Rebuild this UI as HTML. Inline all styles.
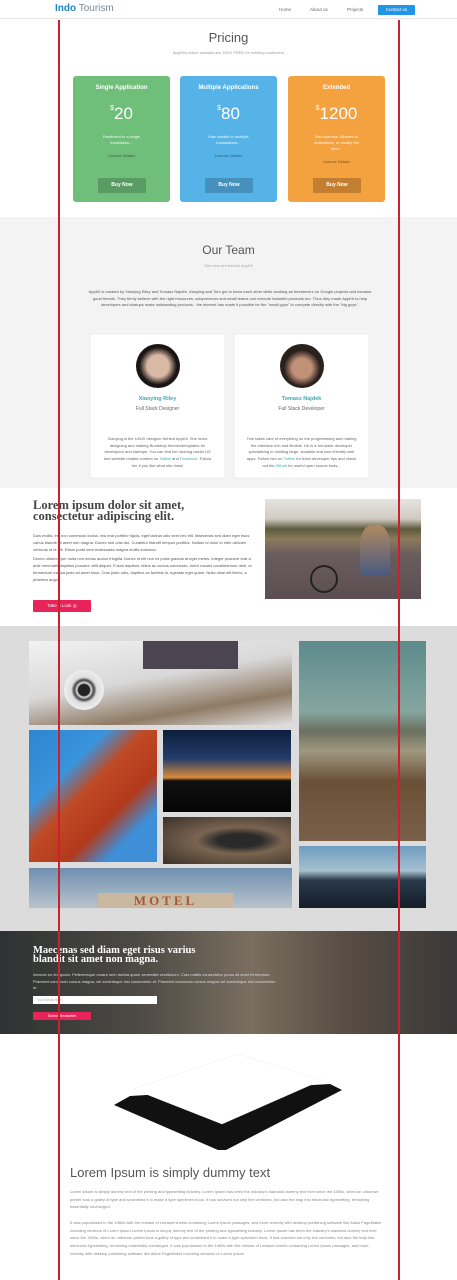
<!DOCTYPE html>
<html><head><meta charset="utf-8"><style>
*{margin:0;padding:0;box-sizing:border-box}
body{width:457px;height:1280px;position:relative;overflow:hidden;background:#fff;font-family:"Liberation Sans",sans-serif;color:#555}
.a{position:absolute}
.t{font-size:4px;line-height:6.5px;color:#666}
.card{position:absolute;top:76px;width:97px;height:126px;border-radius:3px;color:#fff;text-align:center}
.card h4{font-size:6px;margin-top:9px;font-weight:bold}
.card .p{font-size:17px;margin-top:13px;font-weight:300}
.card .p sup{font-size:7px;vertical-align:top;position:relative;top:1px}
.card .d{font-size:4px;line-height:6px;margin-top:10px;padding:0 20px;opacity:.9}
.card .l{font-size:4px;margin-top:7px;color:rgba(0,0,0,.5)}
.card .b{position:absolute;left:25px;bottom:9px;width:48px;height:15px;font-size:5px;font-weight:bold;line-height:15px;border-radius:1px}
.tm{position:absolute;top:335px;width:133px;height:142px;background:#fff;text-align:center}
.av{width:44px;height:44px;border-radius:50%;margin:9px auto 0}
.tm .n{font-size:5.5px;font-weight:bold;color:#3fa7b0;margin-top:8px}
.tm .r{font-size:5px;color:#666;margin-top:4px}
.tm .x{font-size:4px;line-height:6.7px;color:#666;margin-top:24px;padding:0 10px}
.red{position:absolute;top:20px;width:2px;height:1260px;background:#cc2030}
</style></head><body>
<div class="a" style="top:0;left:0;width:457px;height:19px;border-bottom:1px solid #e4e4e4;background:#fff"></div>
<div class="a" style="left:55px;top:3px;font-size:10px;color:#1f86c9"><b>Indo</b> <span style="color:#7a8a96">Tourism</span></div>
<div class="a" style="left:279px;top:7px;font-size:4.5px;color:#666">Home</div>
<div class="a" style="left:310px;top:7px;font-size:4.5px;color:#666">About us</div>
<div class="a" style="left:347px;top:7px;font-size:4.5px;color:#666">Projects</div>
<div class="a" style="left:378px;top:5px;width:37px;height:10px;background:#2196e8;border-radius:1px;color:#fff;font-size:4.5px;line-height:10px;text-align:center">Contact us</div>
<div class="a" style="left:0;top:30px;width:457px;text-align:center;font-size:13px;color:#555;font-weight:300">Pricing</div>
<div class="a t" style="left:0;top:50px;width:457px;text-align:center;color:#999">AppKit's future updates are 100% FREE for existing customers</div>
<div class="card" style="left:73px;background:#6fbf7a"><h4>Single Application</h4><div class="p"><sup>$</sup>20</div><div class="d">Restricted to a single installation...</div><div class="l">License Details</div><div class="b" style="background:#5a9a63">Buy Now</div></div>
<div class="card" style="left:180px;background:#55b3e8"><h4>Multiple Applications</h4><div class="p"><sup>$</sup>80</div><div class="d">Max installs to multiple installations...</div><div class="l">License Details</div><div class="b" style="background:#4690bd">Buy Now</div></div>
<div class="card" style="left:288px;background:#f4a23f"><h4>Extended</h4><div class="p"><sup>$</sup>1200</div><div class="d">Max licences. Allowed to redistribute, or modify the item...</div><div class="l">License Details</div><div class="b" style="background:#c27e31">Buy Now</div></div>
<div class="a" style="left:0;top:217px;width:457px;height:271px;background:#f3f3f3"></div>
<div class="a" style="left:0;top:243px;width:457px;text-align:center;font-size:12px;color:#555;font-weight:300">Our Team</div>
<div class="a t" style="left:0;top:263px;width:457px;text-align:center;color:#aaa">See who are behind AppKit</div>
<div class="a t" style="left:84px;top:289px;width:292px;text-align:center;color:#555">AppKit is created by Xiaoying Riley and Tomasz Najdek. Xiaoying and Tom got to know each other while working as freelancers on Google projects and became good friends. They firmly believe with the right resources, solopreneurs and small teams can execute beautiful products too. Thus they made AppKit to help developers and startups make outstanding products - the internet has made it possible for the "small guys" to compete directly with the "big guys".</div>
<div class="tm" style="left:91px"><div class="av" style="background:radial-gradient(circle at 50% 50%,#d9b8a4 0 35%,#1a1514 60%)"></div><div class="n">Xiaoying Riley</div><div class="r">Full Stack Designer</div><div class="x">Xiaoying is the UI/UX designer behind AppKit. She loves designing and making Bootstrap themes/templates for developers and startups. You can find her sharing useful UX and website related content on <span style="color:#3fa7b0">Twitter</span> and <span style="color:#3fa7b0">Facebook</span>. Follow her if you like what she does!</div></div>
<div class="tm" style="left:235px"><div class="av" style="background:radial-gradient(circle at 50% 55%,#c09078 0 30%,#2a211c 55%)"></div><div class="n">Tomasz Najdek</div><div class="r">Full Stack Developer</div><div class="x">Tom takes care of everything on the programming and making the interface rich and flexible. He is a full-stack developer specialising in building large, scalable and user-friendly web apps. Follow him on <span style="color:#3fa7b0">Twitter</span> for fresh developer tips and check out his <span style="color:#3fa7b0">Github</span> for useful open source tools...</div></div>
<div class="a" style="left:33px;top:500px;font-family:'Liberation Serif',serif;font-weight:bold;font-size:12.5px;line-height:11px;color:#444">Lorem ipsum dolor sit amet,<br>consectetur adipiscing elit.</div>
<div class="a t" style="left:33px;top:532px;width:222px;color:#555;line-height:7px">Duis mollis, est non commodo luctus, nisi erat porttitor ligula, eget lacinia odio sem nec elit. Maecenas sed diam eget risus varius blandit sit amet non magna. Donec sed odio dui. Curabitur blandit tempus porttitor. Nullam id dolor id nibh ultricies vehicula ut id elit. Etiam porta sem malesuada magna mollis euismod.<div style="height:2px"></div>Donec ullamcorper nulla non metus auctor fringilla. Donec id elit non mi porta gravida at eget metus. Integer posuere erat a ante venenatis dapibus posuere velit aliquet. Fusce dapibus, tellus ac cursus commodo, tortor mauris condimentum nibh, ut fermentum massa justo sit amet risus. Cras justo odio, dapibus ac facilisis in, egestas eget quam. Nulla vitae elit libero, a pharetra augue.</div>
<div class="a" style="left:33px;top:600px;width:58px;height:12px;background:#e8235a;border-radius:1px;color:#fff;font-size:4.5px;line-height:12px;text-align:center">Take a Look ◎</div>
<div class="a" style="left:265px;top:499px;width:156px;height:100px;background:linear-gradient(180deg,#e6e4e0 0,#cfc9c0 20%,#5c5a3e 30%,#8b7a5a 40%,#6b5d5e 55%,#5b4e52 100%)"></div>
<div class="a" style="left:360px;top:525px;width:30px;height:50px;background:linear-gradient(#b08a60,#4a5a80);border-radius:40% 40% 10% 10%"></div>
<div class="a" style="left:310px;top:565px;width:28px;height:28px;border:2px solid #222;border-radius:50%"></div>
<div class="a" style="left:0;top:626px;width:457px;height:305px;background:#dcdcdc"></div>
<div class="a" style="left:29px;top:641px;width:263px;height:84px;background:linear-gradient(170deg,#f2f2f2 0,#d8d8d8 45%,#8f7a64 75%,#e0e0e0 100%)"></div>
<div class="a" style="left:64px;top:670px;width:40px;height:40px;border-radius:50%;background:radial-gradient(#222 0 20%,#ddd 25%,#444 35%,#ddd 45%,#eee 70%)"></div>
<div class="a" style="left:143px;top:641px;width:95px;height:28px;background:#4a4550"></div>
<div class="a" style="left:29px;top:730px;width:128px;height:132px;background:linear-gradient(135deg,#2b86d0 0,#3a94dc 30%,#c04a25 45%,#b23a1c 65%,#3e8ed8 80%)"></div>
<div class="a" style="left:163px;top:730px;width:128px;height:82px;background:linear-gradient(180deg,#0d1e3e 0,#253c6a 35%,#d98a3a 58%,#101010 62%,#060606 100%)"></div>
<div class="a" style="left:163px;top:817px;width:128px;height:47px;background:radial-gradient(ellipse at 60% 50%,#2a2a2a 0 20%,#7a6450 40%,#3a3128 100%)"></div>
<div class="a" style="left:29px;top:868px;width:263px;height:40px;background:linear-gradient(180deg,#6f8fb0,#b8c3cc)"></div>
<div class="a" style="left:98px;top:893px;width:135px;height:15px;background:#cbb8a0;color:#a05a3a;font-family:'Liberation Serif',serif;font-size:13px;line-height:15px;text-align:center;font-weight:bold;letter-spacing:3px">MOTEL</div>
<div class="a" style="left:299px;top:641px;width:127px;height:200px;background:linear-gradient(180deg,#5d8a8c 0,#86a6a0 35%,#6a7060 45%,#a09880 55%,#6b5038 70%,#7a6048 100%)"></div>
<div class="a" style="left:299px;top:846px;width:127px;height:62px;background:linear-gradient(180deg,#6e9cc0 0,#a8c0d0 40%,#2a3a4a 55%,#141e28 100%)"></div>
<div class="a" style="left:0;top:931px;width:457px;height:103px;background:linear-gradient(90deg,#2e3232 0,#4c4a44 30%,#7a6e60 55%,#5a4e44 75%,#3a3838 100%)"></div>
<div class="a" style="left:33px;top:947px;font-family:'Liberation Serif',serif;font-weight:bold;font-size:10.5px;line-height:8.5px;color:#fff">Maecenas sed diam eget risus varius<br>blandit sit amet non magna.</div>
<div class="a t" style="left:33px;top:972px;width:245px;color:#ddd">Aenean eu leo quam. Pellentesque ornare sem lacinia quam venenatis vestibulum. Cras mattis consectetur purus sit amet fermentum. Praesent commodo cursus magna, vel scelerisque nisl consectetur et. Praesent commodo cursus magna vel scelerisque nisl consectetur et.</div>
<div class="a" style="left:33px;top:996px;width:124px;height:8px;background:#fff;font-size:3.5px;line-height:8px;color:#aaa;padding-left:4px">Your Email Here...</div>
<div class="a" style="left:33px;top:1012px;width:58px;height:8px;background:#e8235a;color:#fff;font-size:3.5px;line-height:8px;text-align:center">Submit Newsletter</div>
<svg class="a" style="left:110px;top:1050px" width="240" height="115" viewBox="110 1050 240 115">
<polygon points="114,1105 130,1096 330,1084 342,1090 226,1150 218,1150" fill="#111"/>
<polygon points="133,1089 238,1054 322,1080 222,1124" fill="#fff" stroke="#eee" stroke-width="0.5"/>
</svg>
<div class="a" style="left:70px;top:1165px;font-size:13px;color:#555;font-weight:300">Lorem Ipsum is simply dummy text</div>
<div class="a t" style="left:70px;top:1188px;width:312px;color:#888;line-height:7.7px">Lorem Ipsum is simply dummy text of the printing and typesetting industry. Lorem Ipsum has been the industry's standard dummy text ever since the 1500s, when an unknown printer took a galley of type and scrambled it to make a type specimen book. It has survived not only five centuries, but also the leap into electronic typesetting, remaining essentially unchanged.</div>
<div class="a t" style="left:70px;top:1219px;width:312px;color:#888;line-height:7.7px">It was popularised in the 1960s with the release of Letraset sheets containing Lorem Ipsum passages, and more recently with desktop publishing software like Aldus PageMaker including versions of Lorem Ipsum.Lorem Ipsum is simply dummy text of the printing and typesetting industry. Lorem Ipsum has been the industry's standard dummy text ever since the 1500s, when an unknown printer took a galley of type and scrambled it to make a type specimen book. It has survived not only five centuries, but also the leap into electronic typesetting, remaining essentially unchanged. It was popularised in the 1960s with the release of Letraset sheets containing Lorem Ipsum passages, and more recently with desktop publishing software like Aldus PageMaker including versions of Lorem Ipsum.</div>
<div class="red" style="left:58px"></div>
<div class="red" style="left:398px"></div>
</body></html>
